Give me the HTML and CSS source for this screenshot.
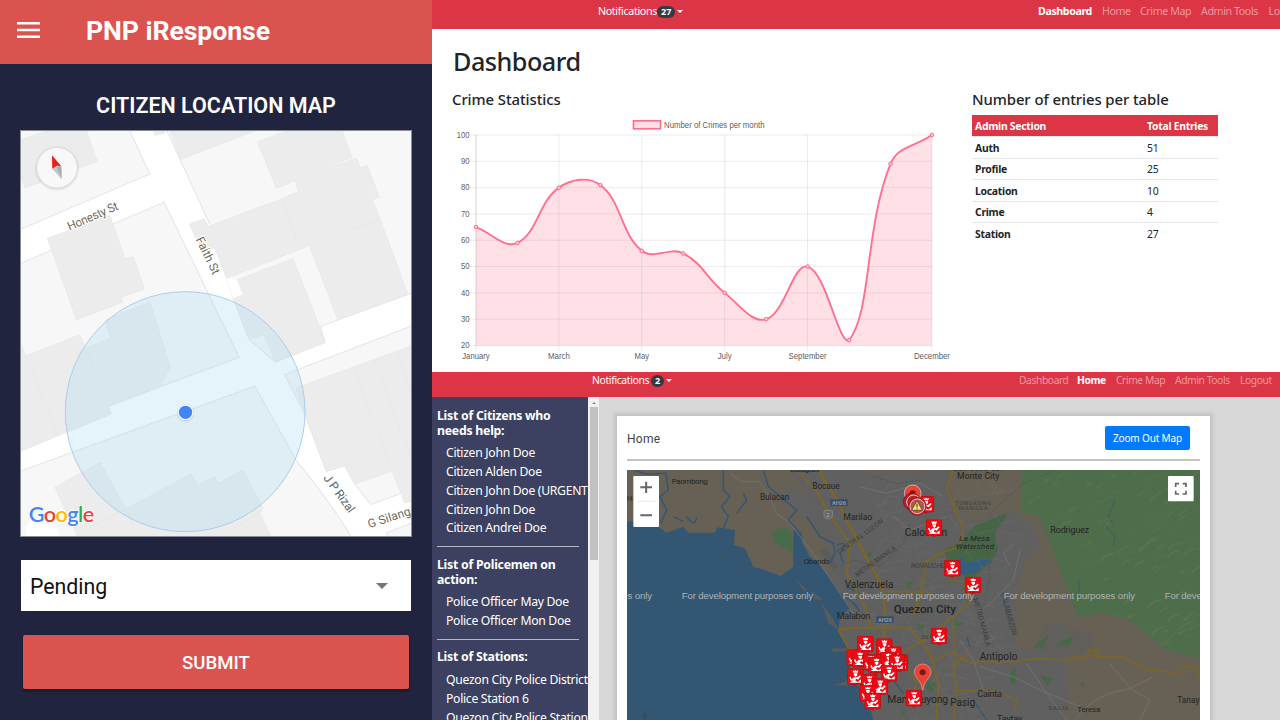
FILE: index.html
```html
<!DOCTYPE html>
<html lang="en">
<head>
<meta charset="utf-8">
<title>PNP iResponse</title>
<link rel="stylesheet" href="styles.css">
</head>
<body>
<div class="page">
  <section class="phone">
    <header class="appbar">
      <svg class="menu" viewBox="0 0 23 16"><path d="M0 1.3h23M0 8h23M0 14.7h23" stroke="#fff" stroke-width="2.4"/></svg>
      <span class="apptitle">PNP iResponse</span>
    </header>
    <h2 class="maptitle">CITIZEN LOCATION MAP</h2>
    <svg class="streetmap" viewBox="63 391 1171 1215" preserveAspectRatio="none">
      <defs><filter id="soft" x="-30%" y="-30%" width="160%" height="160%"><feDropShadow dx="0" dy="2" stdDeviation="3" flood-opacity=".22"/></filter></defs>
      <rect x="63" y="391" width="1171" height="1217" fill="#fff"/>
      <g fill="#f7f7f7" stroke="#e8e8e8" stroke-width="3.5">
        <path d="M50 380H385L450 520L50 691Z"/>
        <path d="M496 380L632 675L700 893L748 1016L827 1084L975 1025L962 978L1015 958L1250 872V380Z"/>
        <path d="M50 793L493 605L718 1070L480 1158L330 1215L50 1355Z"/>
        <path d="M50 1415L765 1157L890 1380Q990 1500 1062 1620H50Z"/>
        <path d="M1250 970L855 1122L915 1240L980 1412L1035 1395L1065 1450L1113 1512L1250 1462Z"/>
        <path d="M1168 1620L1160 1596L1250 1562V1620Z"/>
      </g>
      <g fill="#ececec" stroke="#e6e6e6" stroke-width="2">
        <path d="M50 422L140 391H260L292 482L75 562L50 500Z"/>
        <path d="M510 391H765L543 476Z"/><path d="M460 388H495V397L465 404Z"/>
        <path d="M773 424L860 391H1028L1057 470L830 563Z"/>
        <path d="M887 540L1070 472L1082 500L1103 495L1139 590L1118 598L1142 657L902 745L845 595L895 573Z"/>
        <path d="M568 670L613 654L626 677L845 595L902 745L680 833L645 742L606 750Z"/>
        <path d="M930 738L1142 657L1224 880L1015 958Z"/>
        <path d="M712 838L880 773L977 1025L827 1083L792 1001L748 1016L700 892L728 881Z"/>
        <path d="M142 713L330 645L375 773L400 768L434 865L363 890L368 905L230 957Z"/>
        <path d="M315 958L450 905L511 1098L478 1160L330 1215L258 1042L333 1013Z"/>
        <path d="M78 1066L240 1002L335 1240L175 1305L50 1357V1000Z"/>
        <path d="M165 1460L300 1385L378 1525L420 1620H238Z"/>
        <path d="M378 1525L573 1420L595 1453L645 1428L657 1447L730 1408L790 1523L778 1533L820 1620H420Z"/>
        <path d="M888 1162L1250 1030V1500L1215 1507L1177 1410L1067 1450L1035 1395L980 1412Z"/>
        <path d="M78 1066L175 1305M230 1603L378 1525M1062 1100L1177 1410M1122 1075L1250 1415M1190 1050L1250 1215M665 1606L788 1530" fill="none"/>
      </g>
      <path d="M712 838L680 833L700 893L728 881Z" fill="#fff"/>
      <path d="M78 1606Q70 1560 125 1543L160 1560L180 1606Z" fill="#fff"/>
      <circle cx="556" cy="1233" r="360" fill="rgba(168,215,242,.3)" stroke="#abcdea" stroke-width="3"/>
      <circle cx="557" cy="1235" r="23" fill="#fff" filter="url(#soft)"/><circle cx="557" cy="1235" r="20" fill="#4285f4"/>
      <circle cx="171" cy="501" r="61" fill="#fafafa" fill-opacity=".95" stroke="#d6d6d6" stroke-width="2.5" filter="url(#soft)"/>
      <path d="M156 464L184 497L171 495L157 505Z" fill="#e8201c"/><path d="M157 505L171 495L184 497L185 535Z" fill="#c5c5c5"/><path d="M171 499L184 497L185 535Z" fill="#aaa"/>
      <g class="road-label">
        <text x="209" y="690" transform="rotate(-23.5 209 690)" textLength="162">Honesty St</text>
        <text x="587" y="716" transform="rotate(64 587 716)" textLength="120">Faith St</text>
        <text x="970" y="1432" transform="rotate(54 970 1432)" textLength="132" fill="#58666e">J P Rizal</text>
        <text x="1109" y="1583" transform="rotate(-18 1109 1583)" textLength="133">G Silang</text>
      </g>
      <text class="glogo" x="86" y="1564" textLength="197"><tspan fill="#4285f4">G</tspan><tspan fill="#ea4335">o</tspan><tspan fill="#fbbc05">o</tspan><tspan fill="#4285f4">g</tspan><tspan fill="#34a853">l</tspan><tspan fill="#ea4335">e</tspan></text>
    </svg>
    <div class="select"><span>Pending</span><i class="arrow"></i></div>
    <div class="submit">SUBMIT</div>
  </section>

  <main class="web">
    <section class="dash">
      <header class="bar bar-dash">
        <span class="notif">Notifications</span><b class="badge">27</b><i class="caret"></i>
        <nav class="nav nav-dash"><b>Dashboard</b><span>Home</span><span>Crime Map</span><span>Admin Tools</span><span>Logout</span></nav>
      </header>
      <div class="dash-body">
        <h1>Dashboard</h1>
        <div class="cols">
          <div class="stats">
            <h3>Crime Statistics</h3>
            <svg class="chart" viewBox="452 114 500 250">
              <g id="grid" stroke="#000" stroke-opacity=".1" stroke-width=".8"></g>
              <path id="area" fill="rgba(255,99,132,.2)"/>
              <path id="line" fill="none" stroke="#ff6f8e" stroke-width="1.9"/>
              <g id="dots" fill="#ffc0cc" stroke="#ff6f8e" stroke-width="1"></g>
              <rect x="633.5" y="120.8" width="27" height="8" fill="#ffe0e6" stroke="#ff6f8e" stroke-width="1.7"/>
              <g class="chart-text" id="labels"><text x="664" y="127.6" textLength="100.500" lengthAdjust="spacingAndGlyphs">Number of Crimes per month</text></g>
            </svg>
          </div>
          <div class="entries">
            <h3>Number of entries per table</h3>
            <table>
              <tr><th>Admin Section</th><th>Total Entries</th></tr>
              <tr><td>Auth</td><td>51</td></tr>
              <tr><td>Profile</td><td>25</td></tr>
              <tr><td>Location</td><td>10</td></tr>
              <tr><td>Crime</td><td>4</td></tr>
              <tr><td>Station</td><td>27</td></tr>
            </table>
          </div>
        </div>
      </div>
    </section>

    <section class="home">
      <header class="bar bar-home">
        <span class="notif">Notifications</span><b class="badge">2</b><i class="caret"></i>
        <nav class="nav nav-home"><span>Dashboard</span><b>Home</b><span>Crime Map</span><span>Admin Tools</span><span>Logout</span></nav>
      </header>
      <div class="home-body">
        <aside class="side">
          <h4>List of Citizens who needs help:</h4>
          <ul><li>Citizen John Doe</li><li>Citizen Alden Doe</li><li>Citizen John Doe (URGENT</li><li>Citizen John Doe</li><li>Citizen Andrei Doe</li></ul>
          <h4>List of Policemen on action:</h4>
          <ul><li>Police Officer May Doe</li><li>Police Officer Mon Doe</li></ul>
          <h4>List of Stations:</h4>
          <ul><li>Quezon City Police District</li><li>Police Station 6</li><li>Quezon City Police Station</li></ul>
        </aside>
        <div class="scroll"><i class="up"></i><i class="thumb"></i></div>
        <div class="content">
          <div class="card">
            <div class="card-head"><span>Home</span><span class="btn">Zoom Out Map</span></div>
            <svg class="citymap" viewBox="21 210 1719 750" preserveAspectRatio="none">
              <defs>
                <clipPath id="forest"><path d="M1205 210H1740V778L1640 750L1520 655L1450 640L1375 650L1310 480L1260 350L1205 335Z"/></clipPath>
                <symbol id="cop" viewBox="0 0 50 56">
                  <path d="M17 46L25 55L33 46Z" fill="#d80d12"/>
                  <rect x="1" y="1" width="48" height="47" rx="4" fill="#ee0a12" stroke="#b70a10" stroke-width="2"/>
                  <path d="M17 6L22 8L25 5L29 8L34 6L32 13H19ZM20 15H31V21L26 26L21 21ZM7 27L11 25L14 33L21 27H31L39 21L42 24L33 34L28 31L24 36L32 41L42 33V43H8L20 35L12 38Z" fill="#fff"/>
                </symbol>
              </defs>
              <rect x="21" y="210" width="1719" height="750" fill="#606060"/>
              <path d="M21 210H505L570 290L545 330L620 430L650 500L590 540L440 540L21 600Z" fill="#666154"/>
              <path d="M480 270Q500 330 560 350L580 320L530 260Z" fill="#626161"/>
              <path d="M700 210H930L880 222L740 220ZM985 210H1205V335L1130 340L1070 365L1005 330L990 280Z" fill="#666154"/>
              <path d="M1205 335L1260 350L1310 480L1375 650L1450 640L1520 655L1640 750L1740 778V960H1337L1345 850L1330 780L1370 720L1270 690L1235 750L1185 740L1190 640L1185 580L1210 500L1260 430L1230 370L1190 350Z" fill="#666154"/>
              <path d="M1275 675L1330 670L1380 695L1425 700L1415 735L1385 765L1330 770L1240 748Z" fill="#605f5b"/>
              <path d="M1205 210H1740V778L1640 750L1520 655L1450 640L1375 650L1310 480L1260 350L1205 335Z" fill="#4d6d4b"/>
              <g id="ridges" clip-path="url(#forest)" fill="none" stroke="#60744a" stroke-width="5" stroke-linecap="round"></g>
              <path d="M970 450L1020 430L1060 380L1110 360L1160 340L1158 355L1127 390L1125 420L1135 450L1110 490L1050 540L990 500Z" fill="#466545"/>
              <path d="M1000 475L1020 485L1028 465L1040 490L1080 475L1120 485L1090 500L1062 520L1020 525L992 496Z" fill="#335e7d"/>
              <path d="M455 395L500 382L515 400L518 460L485 440L465 430Z" fill="#486b4a"/>
              <path d="M21 365L80 358L112 378L140 398L190 380L205 398L285 398L292 382L345 390L342 435L375 445L400 500L440 512L482 528L520 500L520 390L545 398L548 430L570 470L600 495L640 550L690 625L660 650L655 690L690 760L690 820L745 905L760 960H21Z" fill="#335773"/>
              <path d="M595 450L620 445L655 500L640 510ZM525 535L560 570L554 575ZM605 610L635 650L658 690L625 670ZM570 570L610 600L585 598ZM635 745H690V752L640 756ZM650 810L690 850L683 857L640 855L680 844ZM700 855L750 930L738 925Z" fill="#585c5d"/>
              <g fill="none" stroke="#335773" stroke-width="4.500">
                <path d="M40 210L80 222L138 220L145 270L120 290L140 330L122 370M310 210V270L330 290L305 320L325 350L310 385"/>
                <path d="M430 210L445 260L480 290L530 330L505 360L540 400M200 350Q225 385 230 352M160 350L190 365M350 340L380 300L370 280M560 350L600 410L640 430L645 460L630 490M650 435Q690 420 660 460L670 490"/>
                <path d="M680 560L720 580M660 580L715 620M700 610L720 635M820 840L850 880M1060 900L1100 960M1040 710L1050 740" stroke-width="4"/>
                <path d="M1485 300L1465 350L1480 370M1450 370L1485 410L1480 440M1375 540L1380 580" stroke-width="2"/>
              </g>
              <g fill="#466847"><path d="M855 540L880 548L875 565L860 560ZM890 672L915 675L910 695L893 690ZM920 840L948 850L940 878L918 865ZM1000 660L1034 663L1015 685L1000 685ZM740 460L755 455V468L740 470ZM840 935L855 930V945L842 950ZM1240 740L1285 705L1270 745ZM1310 735L1360 705L1350 735ZM1170 820L1185 800L1190 850L1170 850ZM1258 825L1300 835L1280 855ZM1380 850L1392 850L1390 865Z"/></g>
              <g id="streets" fill="none" stroke="#727272" stroke-width="2" stroke-opacity=".55"></g>
              <g fill="none" stroke="#737373" stroke-width="2.500">
                <path d="M330 220L365 245H420L448 290L470 340L510 370L590 475L700 640"/>
                <path d="M720 260L800 280L900 250L970 290M820 350L870 390L980 350M1170 500L1150 460L1185 430M1100 620L1180 540L1200 450"/>
                <path d="M1080 800L1180 830L1260 870L1380 920M1220 790L1280 880L1340 960M1365 960Q1420 880 1525 868L1600 830M1470 790L1530 865L1590 900L1560 960M1020 720L1060 780L1100 900"/>
              </g>
              <g fill="none" stroke="#7a6628" stroke-width="6" stroke-linejoin="round">
                <path d="M530 210L595 280L625 340L690 430L680 520L708 570L735 620L752 680"/>
                <path d="M595 210L650 300L700 400L755 500L782 550L795 620L792 740L750 820" stroke-width="8"/>
                <path d="M655 690L690 683H870L930 760L955 850L950 960M655 690L700 770L740 840L760 930"/>
                <path d="M1000 210L980 265L1005 330L1030 380L1020 440L960 460L920 485L900 590L880 650"/>
                <path d="M990 540L1030 545L1050 610L1000 650L960 680L930 690M1000 650L1002 740L1010 780L1000 800L1010 870L1000 960M800 575H920L960 600M940 780L1000 755L1040 785H1190L1245 775L1345 780L1370 770L1400 776L1407 750L1430 752L1438 745L1420 770L1500 770L1560 795L1568 800L1575 810L1640 815L1670 825L1700 798L1730 805L1740 830M1000 800L1050 760M1000 870L1130 875L1190 900L1185 930M750 820L840 760L930 710M860 800L890 850L870 900" stroke-width="5"/>
              </g>
              <path d="M660 500L700 480L780 500L850 430L870 370M760 230L830 250L910 240M1110 340L1210 250L1310 210M1100 440L1110 530L1090 620M1150 600L1170 690M1080 700L1130 690" fill="none" stroke="#4d4d4d" stroke-width="2.5" stroke-dasharray="5 5"/>
              <g class="place">
                <text x="155" y="252" font-size="24" textLength="108">Paombong</text><text x="420" y="299" font-size="25" textLength="88">Bulacan</text><text x="511" y="217" font-size="24" textLength="87">Balagtas</text><text x="577" y="266" font-size="25" textLength="82">Bocaue</text><text x="670" y="360" font-size="26" textLength="87">Marilao</text><text x="551" y="491" font-size="24" textLength="78">Obando</text><text x="21" y="303" font-size="22">Ha</text>
                <text x="854" y="408" font-size="31" textLength="128">Caloocan</text><text x="1011" y="238" font-size="26" textLength="127">Monte City</text><text x="1291" y="398" font-size="27" textLength="117">Rodriguez</text><text x="1000" y="213" font-size="20" textLength="146">San Jose del</text>
                <text x="1018" y="424" font-size="24" font-style="italic" textLength="91">La Mesa</text><text x="1008" y="448" font-size="24" font-style="italic" textLength="114">Watershed</text>
                <text x="674" y="563" font-size="30" textLength="146">Valenzuela</text><text x="821" y="638" font-size="35" font-weight="500" textLength="187">Quezon City</text><text x="650" y="658" font-size="27" textLength="101">Malabon</text><text x="802" y="910" font-size="31" textLength="182">Mandaluyong</text>
                <text x="1079" y="780" font-size="30" textLength="113">Antipolo</text><text x="1072" y="890" font-size="27" textLength="74">Cainta</text><text x="991" y="919" font-size="30" textLength="74">Pasig</text><text x="1131" y="967" font-size="27" textLength="76">Taytay</text><text x="1372" y="936" font-size="24" textLength="69">Teresa</text><text x="1672" y="908" font-size="25" textLength="66">Tanay</text>
              </g>
              <g class="region">
                <text x="1005" y="314" font-size="18" textLength="109">TUNGKONG</text><text x="1016" y="331" font-size="18" textLength="87">MANGGA</text><text x="1286" y="931" font-size="18" textLength="60">DALIG</text><text x="873" y="503" font-size="20" textLength="112">NOVALICHES</text><text x="905" y="716" font-size="16">DILIMAN</text>
                <text x="658" y="463" font-size="20" transform="rotate(-36 658 463)" textLength="165">CENTRAL LUZON</text><text x="712" y="532" font-size="20" transform="rotate(-36 712 532)" textLength="145">METRO MANILA</text>
                <text x="1060" y="596" font-size="21" transform="rotate(75 1060 596)" textLength="150">METRO MANILA</text><text x="1142" y="580" font-size="21" transform="rotate(74 1142 580)" textLength="132">CALABARZON</text><text x="68" y="938" font-size="15" transform="rotate(90 68 938)">Manila Bay</text>
              </g>
              <g><rect x="631" y="298" width="52" height="20" fill="#354c6b"/><rect x="769" y="649" width="52" height="20" fill="#354c6b"/><g fill="#999" font-size="17" font-weight="bold" font-family="Roboto, sans-serif"><text x="636" y="314" textLength="42">AH26</text><text x="774" y="665" textLength="42">AH26</text></g><path d="M612 333L624 330L637 333V350L624 358L612 350Z" fill="#666" stroke="#999" stroke-width="2"/><text x="619" y="351" font-size="17" fill="#bbb" font-family="Roboto, sans-serif">2</text></g>
              <g class="watermark"><text x="-298" y="596" textLength="394">For development purposes only</text><text x="185" y="596" textLength="394">For development purposes only</text><text x="668" y="596" textLength="394">For development purposes only</text><text x="1151" y="596" textLength="394">For development purposes only</text><text x="1634" y="596" textLength="394">For development purposes only</text></g>
              <g id="markers"></g>
              <g>
                <circle cx="878" cy="280" r="25" fill="#e94336" stroke="#ddd" stroke-width="2"/><circle cx="878" cy="280" r="9" fill="#7f1712"/>
                <circle cx="876" cy="305" r="26" fill="#b91c24" stroke="#7c1118" stroke-width="2"/><circle cx="881" cy="306" r="21" fill="#c02028" stroke="#ddd" stroke-width="3"/>
                <circle cx="892" cy="319" r="27" fill="#c5222a" stroke="#8b151c" stroke-width="2"/><circle cx="892" cy="319" r="22" fill="#b35550" stroke="#e9c8c8" stroke-width="3"/><path d="M891 302L907 331H875Z" fill="#f6e65c" stroke="#433" stroke-width="2" stroke-linejoin="round"/><path d="M891 311V322M891 325V328" stroke="#222" stroke-width="3"/>
                <path d="M908 871Q906 850 892 836Q883 825 883 817A25 25 0 0 1 933 817Q933 825 924 836Q910 850 908 871Z" fill="#ea4335" stroke="#e9a7a0" stroke-width="2"/><circle cx="908" cy="817" r="9" fill="#7f1712"/>
              </g>
              <rect x="40" y="228" width="77" height="153" rx="3" fill="#fff"/><path d="M50 304H107" stroke="#e2e2e2" stroke-width="2"/><path d="M61 262H96M78.500 245V279M61 346H96" stroke="#666" stroke-width="6"/>
              <rect x="1644" y="228" width="77" height="76" rx="3" fill="#fff"/><path d="M1667 261V251H1677M1688 251H1698V261M1698 272V282H1688M1677 282H1667V272" fill="none" stroke="#666" stroke-width="5"/>
            </svg>
          </div>
        </div>
      </div>
    </section>
  </main>
</div>
<script src="script.js"></script>
</body>
</html>
```
FILE: styles.css
```css
* { box-sizing: border-box; }
body { margin: 0; background: #fff; font-family: "Noto Sans", "Open Sans", sans-serif; }
h1, h2, h3, h4, ul { margin: 0; padding: 0; list-style: none; }
svg { display: block; }
.page { display: flex; width: 1280px; height: 720px; overflow: hidden; }

.phone { width: 432px; background: #20243e; font-family: Roboto, sans-serif; display: flex; flex-direction: column; }
.appbar { height: 63.500px; background: #da534f; display: flex; align-items: center; padding: 0 0 3px 17px; color: #fff; }
.menu { width: 23px; height: 16px; }
.apptitle { margin-left: 46px; font-weight: 700; font-size: 26.7px; letter-spacing: -.1px; padding-top: 2px; }
.maptitle { color: #fff; font-size: 21.5px; font-weight: 600; line-height: 26px; text-align: center; margin-top: 29px; height: 38px; }
.streetmap { width: 390px; height: 405px; margin-left: 21px; outline: 1px solid #8a8c98; outline-offset: -.5px; }
.road-label { font-size: 36px; fill: #6d6b5a; stroke: #fff; stroke-width: 6px; paint-order: stroke; }
.glogo { font-family: Lato, sans-serif; font-size: 65px; font-weight: 600; stroke: #fff; stroke-width: 5px; paint-order: stroke; }
.select { width: 390px; height: 50.500px; margin: 24.500px 0 0 21px; background: #fff; display: flex; align-items: center; justify-content: space-between; padding: 2px 23px 0 9px; font-size: 21.3px; color: #111; }
.arrow { border: 6px solid transparent; border-top-color: #757575; border-bottom: 0; margin-bottom: 1px; }
.submit { width: 386px; height: 54px; margin: 24px 0 0 23px; border-radius: 2px; background: #da534f; color: #fff; font-size: 18.600px; font-weight: 500; line-height: 56px; text-align: center; box-shadow: 0 2px 3px rgba(0,0,0,.4); }

.web { width: 848px; }
.dash { height: 372px; display: flex; flex-direction: column; }
.bar { background: #dc3545; display: flex; align-items: flex-start; color: #fff; font-size: 10.700px; line-height: 15px; overflow: hidden; flex: none; }
.bar-dash { height: 29px; padding: 4px 0 0 166px; }
.bar-home { height: 25px; padding: 1px 0 0 160px; }
.notif { width: 59px; letter-spacing: -.36px; }
.badge { background: #343a40; border-radius: 6px; height: 12px; padding: 0 4px; font-size: 9px; line-height: 12px; margin-top: 2px; }
.caret { border: 3.500px solid transparent; border-top-color: #fff; border-bottom: 0; margin: 6px 0 0 2px; }
.nav { margin-left: auto; display: grid; white-space: nowrap; color: #ed9aa2; letter-spacing: -.42px; }
.nav b { color: #fff; }
.nav-dash { width: 242px; grid-template-columns: 64px 38px 61px 67.500px 40px; }
.nav-home { width: 261px; grid-template-columns: 58px 39px 59px 65px 40px; font-size: 10.300px; }
.bar-home .notif { font-size: 10.400px; letter-spacing: -.36px; }
.dash-body { padding: 16px 20px 0; color: #212529; }
h1 { font-size: 25.200px; font-weight: 500; line-height: 32px; height: 46px; letter-spacing: -.5px; padding-left: 1px; }
.cols { display: flex; }
.stats { width: 520px; }
h3 { font-size: 14.900px; font-weight: 500; line-height: 17px; height: 23px; letter-spacing: -.08px; white-space: nowrap; }
.entries h3 { height: 24px; }
.chart { width: 500px; height: 250px; }
.chart-text { font-family: "Liberation Sans", sans-serif; font-size: 8.200px; fill: #606060; }
table { width: 245.500px; border-collapse: collapse; font-size: 10.400px; table-layout: fixed; letter-spacing: -.27px; }
tr { height: 21.500px; border-bottom: 1px solid #e5e7ea; }
tr:last-child { border-bottom: 0; }
th { background: #dc3545; color: #fff; text-align: left; }
th, td { padding: 0 0 0 3px; }
td { padding-top: 1px; }
th:first-child { width: 172px; }
td:first-child { font-weight: 700; }

.home { height: 348px; }
.home-body { display: flex; height: 323px; background: #d7d7d7; }
.side { width: 156px; background: #3c4161; color: #fff; padding: 10.500px 0 0 5px; overflow: hidden; }
h4 { font-size: 12.300px; line-height: 15px; letter-spacing: -.25px; width: 135px; margin-bottom: 6.500px; }
.side ul { padding: 0 0 8px 9px; }
.side ul::after { content: ""; display: block; width: 142px; height: 1px; background: #b3b5c0; margin: 8px 0 1.500px -9px; }
li { font-size: 12.200px; line-height: 18.850px; letter-spacing: -.3px; white-space: nowrap; }
.scroll { width: 11px; background: #f1f1f1; display: flex; flex-direction: column; align-items: center; }
.up { border: 2.500px solid transparent; border-bottom-color: #888; border-top: 0; margin: 5px 0 3px; }
.thumb { width: 8px; height: 153px; background: #c1c1c1; }
.content { padding: 19px 0 0 18px; }
.card { width: 592.500px; height: 310px; background: #fff; box-shadow: 0 0 3px 3px #c4c4c4; padding: 0 10px; }
.card-head { height: 45px; border-bottom: 2px solid #c4c4c4; display: flex; align-items: center; justify-content: space-between; font-family: Roboto, sans-serif; font-size: 12px; letter-spacing: .3px; color: #444; margin-bottom: 9px; padding-top: 2px; }
.btn { width: 85px; height: 24px; background: #007bff; color: #fff; border-radius: 2px; margin: 0 9.500px 2px 0; text-align: center; font: 10px/24px "Noto Sans", sans-serif; letter-spacing: -.15px; }
.citymap { width: 573px; height: 250px; margin-left: -.5px; }
.place { font-family: Roboto, sans-serif; fill: #242424; }
.region { font-family: Roboto, sans-serif; fill: #3e3e3e; }
.watermark { font-family: "Liberation Sans", sans-serif; font-size: 29px; fill: #aeb3b5; }
```
FILE: script.js
```js
const NS = 'http://www.w3.org/2000/svg';
function add(parent, tag, attrs, text) {
  const el = document.createElementNS(NS, tag);
  for (const key in attrs) el.setAttribute(key, attrs[key]);
  if (text) el.textContent = text;
  document.getElementById(parent).appendChild(el);
}

// Monthly line chart
const values = [65, 59, 80, 81, 56, 55, 40, 30, 50, 22, 89, 100];
const X = i => 476 + i * 41.45;
const Y = v => 135 + (100 - v) * 2.6313;
const cap = y => Math.max(135, Math.min(345.5, y));
const pts = values.map((v, i) => [X(i), Y(v)]);
const ctrl = pts.map((p, i) => {
  const a = pts[i - 1] || p, b = pts[i + 1] || p;
  const d1 = Math.hypot(p[0] - a[0], p[1] - a[1]);
  const d2 = Math.hypot(b[0] - p[0], b[1] - p[1]);
  const fa = 0.4 * d1 / (d1 + d2), fb = 0.4 * d2 / (d1 + d2);
  const dx = b[0] - a[0], dy = b[1] - a[1];
  return [p[0] - fa * dx, cap(p[1] - fa * dy), p[0] + fb * dx, cap(p[1] + fb * dy)];
});
let d = `M${pts[0]}`;
for (let i = 1; i < pts.length; i++) d += `C${ctrl[i - 1][2]} ${ctrl[i - 1][3]} ${ctrl[i][0]} ${ctrl[i][1]} ${pts[i]}`;
document.getElementById('line').setAttribute('d', d);
document.getElementById('area').setAttribute('d', d + 'V345.5H476Z');
pts.forEach(p => add('dots', 'circle', { cx: p[0], cy: p[1], r: 1.8 }));
for (let v = 20; v <= 100; v += 10) {
  add('grid', 'path', { d: `M470 ${Y(v)}H932` });
  add('labels', 'text', { x: 469.5, y: Y(v) + 2.8, 'text-anchor': 'end', textLength: v === 100 ? 12.8 : 8.6, lengthAdjust: 'spacingAndGlyphs' }, String(v));
}
[[0, 'January', 27.5], [2, 'March', 22], [4, 'May', 14.5], [6, 'July', 14], [8, 'September', 38], [11, 'December', 36]].forEach(([i, name, w]) => {
  add('grid', 'path', { d: `M${X(i)} 135V351` });
  add('labels', 'text', { x: X(i), y: 358.8, 'text-anchor': 'middle', textLength: w, lengthAdjust: 'spacingAndGlyphs' }, name);
});
add('grid', 'path', { d: 'M476 135V345.5' });

// Terrain ridges and side streets
let seed = 7;
const rnd = () => (seed = (seed * 16807) % 2147483647) / 2147483647;
for (let i = 0; i < 120; i++) {
  const x = 1210 + rnd() * 530, y = 215 + rnd() * 550, l = 8 + rnd() * 30;
  add('ridges', 'path', { d: `M${x} ${y}q${l * .4} ${-l * .5} ${l} ${-l * .6}`, 'stroke-opacity': .3 + rnd() * .6 });
}
for (let i = 0; i < 110; i++) {
  const x = 735 + rnd() * 400, y = 230 + rnd() * 720, l = 20 + rnd() * 45, s = rnd() > .5 ? 1 : -1;
  if (x < 800 && y > 780) continue;
  add('streets', 'path', { d: `M${x} ${y}l${l * .4} ${s * l * .7}l${l} ${-s * l * .25}` });
}

// Police station markers
[[711, 707], [768, 715], [795, 739], [679, 748], [780, 755], [695, 752], [728, 762], [815, 763], [806, 763], [744, 770], [782, 795], [681, 805], [723, 822], [755, 835], [718, 855], [733, 878], [857, 870], [932, 683], [893, 288], [917, 358], [972, 480], [1034, 530]]
  .forEach(([x, y]) => add('markers', 'use', { href: '#cop', x, y, width: 50, height: 56 }));
```
